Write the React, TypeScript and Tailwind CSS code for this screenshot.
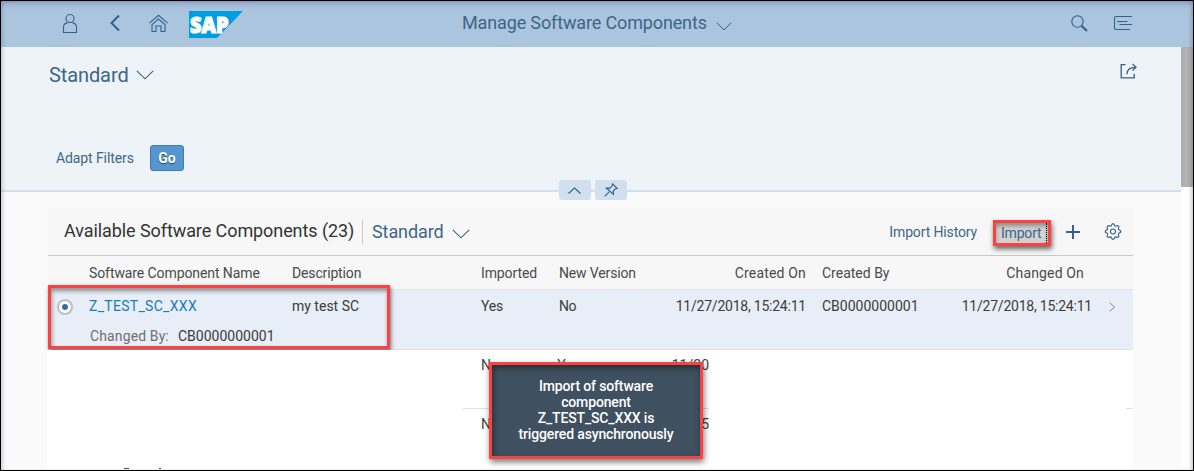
import type { ReactNode } from "react";

const stroke = { fill: "none", stroke: "#346187", strokeWidth: 1.1 } as const;

function Chevron({ className }: { className: string }) {
  return (
    <svg className={className} viewBox="0 0 18 10" {...stroke}>
      <path d="M.8.8 9 8.8 17.2.8" />
    </svg>
  );
}

function SapLogo() {
  return (
    <svg className="ml-[20px] mt-[10px] h-[27px] w-[56px] shrink-0" viewBox="0 0 56 27">
      <path d="M1 0h54L29 27H1z" fill="#009de0" />
      <text x="2" y="21.5" fontFamily="Open Sans, sans-serif" fontWeight="800" fontSize="22" fill="#fff" stroke="#fff" strokeWidth="1.2" textLength="38.5" lengthAdjust="spacingAndGlyphs">SAP</text>
    </svg>
  );
}

function ShellBar() {
  return (
    <header className="flex h-[46px] shrink-0 bg-[#abc5df] text-[#3d6688]">
      <div className="flex w-[461px]">
        <svg className="ml-[61px] mt-[12px] h-[20px] w-[16px]" viewBox="0 0 16 20" {...stroke}>
          <circle cx="8" cy="5.500" r="4" />
          <path d="M5.500 9.900C3 10.400 1.500 11.900 1.500 14v5.500h13V14c0-2.100-1.500-3.600-4-4.100" />
        </svg>
        <svg className="ml-[30px] mt-[13px] h-[18px] w-[12px]" viewBox="0 0 12 18" {...stroke} strokeWidth="2">
          <path d="M11 1.500 3.500 9l7.500 7.500" />
        </svg>
        <svg className="ml-[28px] mt-[13px] h-[18px] w-[20px]" viewBox="0 0 20 18" {...stroke}>
          <path d="M1.500 9.200 10.500 1.300l9 7.900" />
          <path d="M4 10.600 10.500 5l6.500 5.600v6.900h-4v-5.500H8v5.500H4z" />
        </svg>
        <SapLogo />
      </div>
      <div className="flex w-[607px] pt-[10px]">
        <span className="whitespace-nowrap text-[18px] leading-[24px] tracking-[-0.14px]">Manage Software Components</span>
        <Chevron className="ml-[9px] mt-[11px] h-[9px] w-[16px]" />
      </div>
      <div className="flex">
        <svg className="ml-[2px] mt-[13px] h-[18px] w-[18px]" viewBox="0 0 18 18" {...stroke}>
          <circle cx="6.500" cy="7.500" r="5.700" />
          <path d="m10.700 12 5.300 5" strokeWidth="2.200" />
        </svg>
        <svg className="ml-[24px] mt-[14px] h-[16px] w-[20px]" viewBox="0 0 20 16" {...stroke}>
          <path d="M19 1.500H3Q1.500 1.500 1.500 3v10q0 1.500 1.500 1.500h14M4 6.500h10.500M6.500 9.500H19" />
        </svg>
      </div>
    </header>
  );
}

function FilterBar() {
  return (
    <section className="relative h-[145px] w-full shrink-0 border-b-2 border-[#d1e0ee] bg-[#eef3f8] text-[#3d6688]">
      <div className="flex justify-between pl-[48px] pr-[44px] pt-[15px]">
        <div className="flex">
          <span className="text-[20px] leading-[26px] tracking-[-0.1px]">Standard</span>
          <Chevron className="ml-[7px] mt-[8px] h-[10px] w-[18px]" />
        </div>
        <svg className="mt-px h-[16px] w-[17px]" viewBox="0 0 17 16" {...stroke} strokeWidth="1.300">
          <path d="M5.500 1.700H1.200v13.100h13v-4M7 11.300c0-4.500 2.500-7 8.500-7M12.500 1l3.500 3.300-3.500 3.300" />
        </svg>
      </div>
      <div className="mt-[57px] flex items-center pl-[55px]">
        <span className="w-[94px] whitespace-nowrap text-[14px] leading-[20px] tracking-[-0.1px]">Adapt Filters</span>
        <button className="h-[26px] w-[34px] rounded-[3px] border border-[#427cac] bg-[#5496cd] text-[14px] font-bold text-white [text-shadow:0_1px_1px_#0008]">Go</button>
      </div>
      <div className="absolute left-[558px] top-[133px] flex gap-[4px]">
        <span className="flex h-[20px] w-[32px] items-center justify-center rounded-[3px] bg-[#d1e0ee]">
          <svg className="mr-px h-[7px] w-[13px]" viewBox="0 0 13 7" {...stroke}><path d="m.5 6.500 6-5.500 6 5.500" /></svg>
        </span>
        <span className="flex h-[20px] w-[32px] items-center justify-center rounded-[3px] bg-[#d1e0ee]">
          <svg className="mr-px h-[14px] w-[14px]" viewBox="0 0 14 14" {...stroke}><path d="m.7 13.300 4.500-4.500M8.500.8l4.700 4.700-1.700.2-2.200 2.300.2 3.500L2.300 5l3.700.1L8.300 2.600z" /></svg>
        </span>
      </div>
    </section>
  );
}

function Gear() {
  const points = Array.from({ length: 32 }, (_, i) => {
    const r = i % 4 < 2 ? 7.7 : 6.1;
    const a = ((i - 0.5) * Math.PI) / 16;
    return `${8 + r * Math.cos(a)},${8.5 + r * Math.sin(a)}`;
  }).join(" ");
  return (
    <svg className="h-[17px] w-[17px] overflow-visible" viewBox="0 0 17 17" {...stroke}>
      <polygon points={points} strokeLinejoin="round" />
      <circle cx="8" cy="8.5" r="2.500" />
    </svg>
  );
}

function TableToolbar() {
  return (
    <div className="flex h-[48px] w-[1085px] border-b border-[#c8c8c8] bg-[#f7f7f7] pl-[16px] text-[#3d6688]">
      <span className="w-[298px] whitespace-nowrap pt-[11px] text-[18px] leading-[24px] tracking-[-0.08px] text-[#333]">Available Software Components (23)</span>
      <span className="mt-[12px] h-[24px] w-px bg-[#ccc]" />
      <span className="ml-[9px] mt-[12px] text-[18px] leading-[24px] tracking-[-0.1px]">Standard</span>
      <Chevron className="ml-[8px] mt-[21px] h-[10px] w-[18px]" />
      <span className="ml-auto mt-[14px] whitespace-nowrap text-[14px] leading-[20px] tracking-[-0.14px]">Import History</span>
      <span className="ml-[16px] mt-[12px] h-[26px] w-[58px] border-[3px] border-[#fb4242] bg-[#d2d2d2] pl-[5px] text-[14px] leading-[20px] tracking-[-0.2px] shadow-[1px_3px_5px_#0009,inset_0_3px_4px_#0005]">
        <span className="block w-[46px] border-r border-dotted border-black">Import</span>
      </span>
      <svg className="ml-[15px] mt-[16px] h-[15px] w-[15px]" viewBox="0 0 15 15" {...stroke} strokeWidth="2"><path d="M7 1v14M0 8h14" /></svg>
      <span className="ml-[24px] mr-[11px] mt-[15px]"><Gear /></span>
    </div>
  );
}

function Cells({ items }: { items: ReactNode[] }) {
  return (
    <div className="grid grid-cols-[203px_189px_78px_100px_147px_16px_120px_150px] whitespace-nowrap text-[14px] leading-[20px]">
      {items.map((item, i) => <div key={i} className={i === 4 || i === 7 ? "text-right" : ""}>{item}</div>)}
    </div>
  );
}

function HiddenRow({ imported, version, date }: { imported: string; version: string; date: string }) {
  return (
    <div className="ml-[416px] flex w-[246px] overflow-hidden whitespace-nowrap pl-[18px] text-[14px] leading-[20px] text-[#444]">
      <span className="w-[78px]">{imported}</span>
      <span className="w-[117px]">{version}</span>
      <span>{date}</span>
    </div>
  );
}

function ComponentTable() {
  return (
    <section className="ml-[46px] mt-[16px] w-[1086px] text-[#3c3c3c]">
      <div className="ml-px">
        <TableToolbar />
        <div className="h-[34px] border-b border-[#e5e5e5] bg-[#f7f7f7] pl-[41px] pt-[7px] text-[#4a4a4a]">
          <Cells items={[<span className="tracking-[-0.09px]">Software Component Name</span>, <span className="tracking-[-0.15px]">Description</span>, <span className="tracking-[-0.12px]">Imported</span>, <span className="tracking-[-0.15px]">New Version</span>, <span className="tracking-[0.18px]">Created On</span>, "", "Created By", <span className="mr-[8px] tracking-[0.15px]">Changed On</span>]} />
        </div>
        <div className="relative h-[60px] border-b border-[#e0e0e0] bg-[#e8eef7] pl-[41px] pt-[6px]">
          <Cells items={[<span className="tracking-[0.3px] text-[#1a7ab5]">Z_TEST_SC_XXX</span>, "my test SC", <span className="tracking-[-0.2px]">Yes</span>, <span className="tracking-[-0.4px]">No</span>, <span className="tracking-[-0.22px]">11/27/2018, 15:24:11</span>, "", "CB0000000001", <span className="tracking-[-0.22px]">11/27/2018, 15:24:11</span>]} />
          <div className="mt-[10px] flex pl-px text-[14px] leading-[20px]"><span className="w-[88px] tracking-[0.12px] text-[#707070]">Changed By:</span><span>CB0000000001</span></div>
          <span className="absolute left-[9px] top-[9px] flex h-[16px] w-[16px] items-center justify-center rounded-full border-2 border-[#bfbfbf] bg-white"><span className="h-[6px] w-[6px] rounded-full bg-[#346fa8]" /></span>
          <svg className="absolute left-[1061px] top-[12px] h-[10px] w-[7px]" viewBox="0 0 7 10" fill="none" stroke="#888"><path d="m.7.700 4.800 4.300-4.800 4.300" /></svg>
          <span className="absolute left-0 top-[-5px] h-[64px] w-[342px] border-[3px] border-[#fb4242] shadow-[1px_2px_4px_#0008,inset_1px_3px_4px_#0006]" />
        </div>
      </div>
      <div className="relative h-[120px] overflow-hidden bg-white pt-[5px]">
        <HiddenRow imported="No" version="Yes" date="11/20" />
        <div className="mt-[33px] flex justify-between pl-[416px]"><span className="h-px w-[246px] bg-[#e0e0e0]" /><span className="h-px w-[7px] bg-[#e0e0e0]" /></div>
        <div className="mt-[5px]"><HiddenRow imported="No" version="" date="11/15" /></div>
        <div className="mt-[34px] flex pl-[77px]"><span className="h-px w-[5px] bg-[#555]" /><span className="ml-[30px] h-px w-[2px] bg-[#555]" /></div>
      </div>
    </section>
  );
}

export default function App() {
  return (
    <div className="relative flex h-[471px] w-[1194px] flex-col overflow-hidden border border-black bg-white font-['Roboto','Liberation_Sans',sans-serif]">
      <ShellBar />
      <div className="flex min-h-0 flex-1">
        <main className="w-[1180px] shrink-0 overflow-hidden bg-[#fafafa]">
          <FilterBar />
          <ComponentTable />
        </main>
        <div className="flex-1 bg-white"><div className="h-[140px] bg-[#b0b0b0]" /></div>
      </div>
      <div className="absolute left-[488px] top-[361px] h-[97px] w-[214px] border-[3px] border-[#fb4242] bg-[#3f5161] pt-[13px] text-center text-[14px] font-medium leading-[16px] tracking-[-0.15px] text-white shadow-[1px_3px_6px_#0008,inset_1px_3px_6px_#0007]">
        Import of software<br />component<br />Z_TEST_SC_XXX is<br />triggered asynchronously
      </div>
      <div className="pointer-events-none absolute inset-0 shadow-[inset_0_4px_6px_-2px_#5a5a8a77,inset_-3px_0_4px_-2px_#0003,inset_3px_0_4px_-2px_#0002]" />
    </div>
  );
}
